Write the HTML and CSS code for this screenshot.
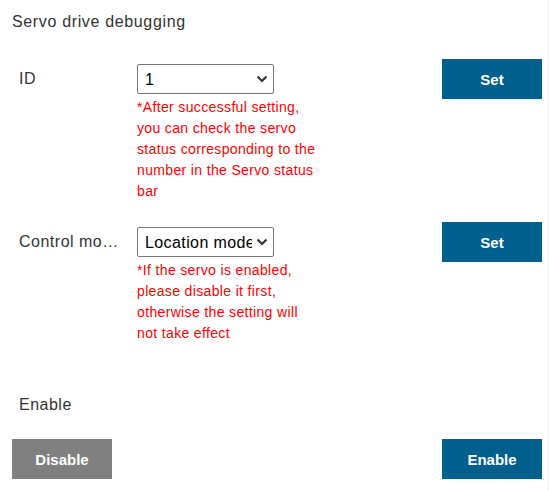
FILE: index.html
```html
<!DOCTYPE html>
<html>
<head>
<meta charset="utf-8">
<link rel="stylesheet" href="styles.css">
</head>
<body>
<div class="page">
  <h1 class="title">Servo drive debugging</h1>
  <div class="row">
    <div class="label">ID</div>
    <div class="field">
      <span class="sel-wrap">
        <select class="sel"><option>1</option></select>
        <svg class="chev" width="12" height="8" viewBox="0 0 12 8"><path d="M1.5 1.5 L6 6 L10.5 1.5" fill="none" stroke="#333" stroke-width="2.2"/></svg>
      </span>
      <p class="hint">*After successful setting, you can check the servo status corresponding to the number in the Servo status bar</p>
    </div>
    <button class="btn">Set</button>
  </div>
  <div class="row row-second">
    <div class="label">Control mode</div>
    <div class="field">
      <span class="sel-wrap">
        <select class="sel"><option>Location mode</option></select>
        <svg class="chev" width="12" height="8" viewBox="0 0 12 8"><path d="M1.5 1.5 L6 6 L10.5 1.5" fill="none" stroke="#333" stroke-width="2.2"/></svg>
      </span>
      <p class="hint">*If the servo is enabled, please disable it first, otherwise the setting will not take effect</p>
    </div>
    <button class="btn">Set</button>
  </div>
  <div class="row-enable">
    <div class="label">Enable</div>
  </div>
  <div class="actions">
    <button class="btn btn-gray">Disable</button>
    <button class="btn">Enable</button>
  </div>
</div>
</body>
</html>
```

FILE: styles.css
```css
html, body {
  margin: 0;
  padding: 0;
  background: #fff;
}
body {
  font-family: "Liberation Sans", Arial, sans-serif;
  color: #333;
}
.page {
  box-sizing: border-box;
  width: 549px;
  height: 491px;
  padding: 13px 6px 0 12px;
  border-right: 1px solid #efefef;
}
.title {
  margin: 0;
  font-size: 16px;
  line-height: 18px;
  font-weight: normal;
  letter-spacing: 0.65px;
  color: #333;
}
.row {
  display: grid;
  grid-template-columns: 118px 1fr 100px;
  align-items: start;
  padding-left: 7px;
  margin-top: 28px;
}
.row-second {
  margin-top: 20px;
}
.label {
  font-size: 16px;
  line-height: 40px;
  letter-spacing: 0.5px;
  white-space: nowrap;
  overflow: hidden;
  text-overflow: ellipsis;
  padding-right: 16px;
}
.field {
  display: flex;
  flex-direction: column;
  align-items: flex-start;
}
.sel-wrap {
  position: relative;
  display: block;
  margin-top: 5px;
  height: 30px;
}
.sel {
  -webkit-appearance: none;
  appearance: none;
  box-sizing: border-box;
  width: 137px;
  height: 30px;
  margin: 0;
  font-family: "Liberation Sans", Arial, sans-serif;
  font-size: 16px;
  letter-spacing: 0.4px;
  color: #000;
  background: #fff;
  border: 1px solid #767676;
  border-radius: 2px;
  padding: 0 21px 0 7px;
}
.chev {
  position: absolute;
  right: 6px;
  top: 11px;
  pointer-events: none;
}
.hint {
  margin: 3px 0 0;
  width: 184px;
  font-size: 14px;
  line-height: 21px;
  letter-spacing: 0.35px;
  color: #ff0000;
}
.btn {
  width: 100px;
  height: 40px;
  border: 0;
  border-radius: 0;
  background: #00608d;
  color: #fff;
  font-family: "Liberation Sans", Arial, sans-serif;
  font-weight: bold;
  font-size: 15px;
  padding: 0;
  cursor: pointer;
}
.btn-gray {
  background: #808080;
}
.row-enable {
  margin-top: 41px;
  padding-left: 7px;
}
.actions {
  display: flex;
  justify-content: space-between;
  margin-top: 14px;
}
```
